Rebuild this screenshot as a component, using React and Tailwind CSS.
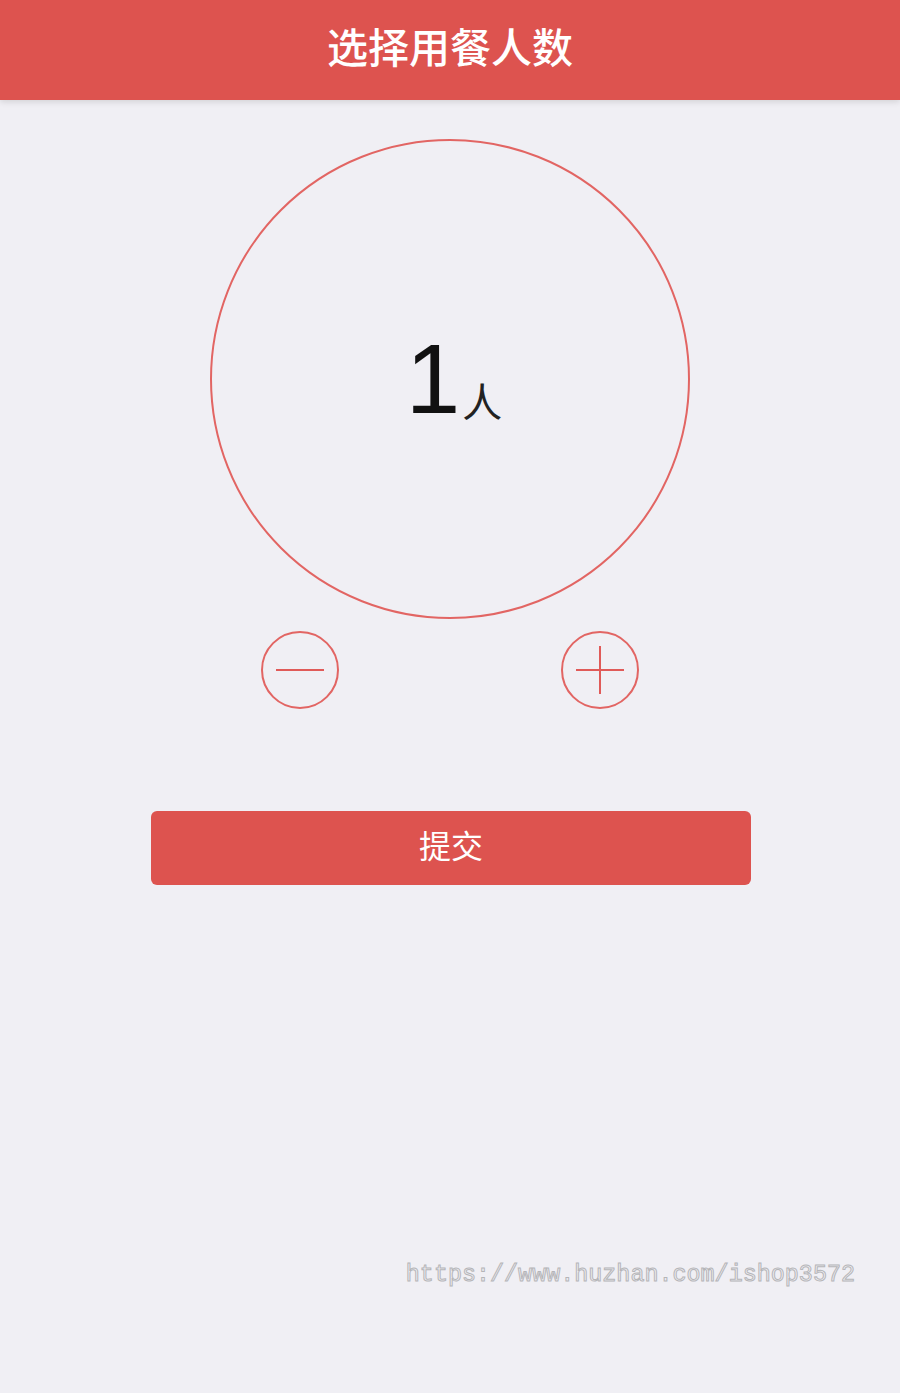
import React, { useState } from 'react';

const CJK = "font-['Noto_Sans_CJK_SC','Noto_Sans',sans-serif]";

function RoundButton({ plus, onClick }) {
  return (
    <button
      onClick={onClick}
      className="w-[78px] h-[78px] rounded-full border-2 border-[#e26563] flex items-center justify-center"
    >
      <svg width="50" height="50" viewBox="0 0 50 50" fill="none" stroke="#e05a58" strokeWidth="2">
        <line x1="1" y1="25" x2="49" y2="25" />
        {plus && <line x1="25" y1="1" x2="25" y2="49" />}
      </svg>
    </button>
  );
}

export default function App() {
  const [count, setCount] = useState(1);

  return (
    <div className={`min-h-[1393px] bg-[#f0eff4] flex flex-col items-center ${CJK}`}>
      <header className="w-full h-[100px] bg-[#dd534f] shadow-[0_2px_6px_rgba(0,0,0,0.12)] flex items-center justify-center">
        <h1 className="text-white text-[41px] font-medium leading-none -mt-[10px]">选择用餐人数</h1>
      </header>

      <div className="mt-[39px] w-[480px] h-[480px] rounded-full border-2 border-[#e26563] flex items-center justify-center">
        <div className="flex items-baseline pl-[8px]">
          <span className="text-[98px] leading-none text-[#111] font-['Liberation_Sans',sans-serif]">{count}</span>
          <span className="text-[40px] leading-none text-[#222] ml-[2px] translate-y-[4px]">人</span>
        </div>
      </div>

      <div className="mt-[12px] w-[378px] flex justify-between">
        <RoundButton onClick={() => setCount((c) => Math.max(1, c - 1))} />
        <RoundButton plus onClick={() => setCount((c) => c + 1)} />
      </div>

      <button className="mt-[102px] ml-[2px] w-[600px] h-[74px] rounded-[6px] bg-[#dd534f] text-white text-[32px] leading-none pb-[8px]">
        提交
      </button>

      <div className="w-full flex justify-end pr-[45px] mt-[379px]">
        <span className="font-['Liberation_Mono',monospace] text-[23.4px] leading-none text-transparent [-webkit-text-stroke:1px_#b5b5b8]">
          https://www.huzhan.com/ishop3572
        </span>
      </div>
    </div>
  );
}
